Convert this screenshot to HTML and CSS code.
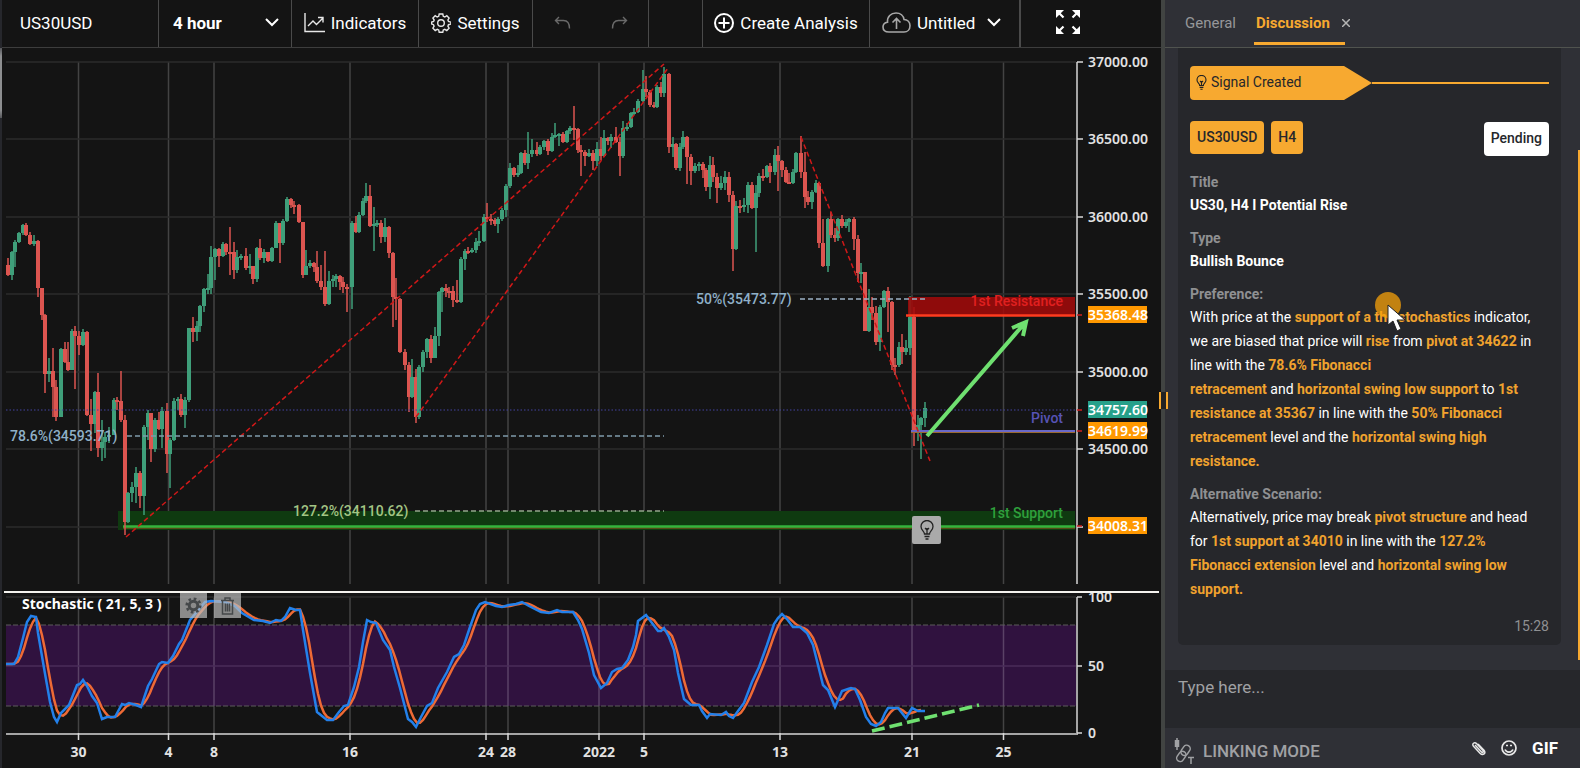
FILE: index.html
```html
<!DOCTYPE html>
<html lang="en">
<head>
    <meta charset="UTF-8">
    <meta name="viewport" content="width=device-width, initial-scale=1.0">
    <title>US30USD - Chart</title>
    <link rel="stylesheet" href="styles.css">
</head>
<body>
    <div class="app">
        <div class="edge"></div>

        <main class="workspace">
            <header class="toolbar">
                <button type="button" class="tool tool-symbol">US30USD</button>
                <div class="tool tool-interval">
                    <select class="tool-select" aria-label="Interval">
                        <option>4 hour</option>
                    </select>
                    <svg class="chevron" width="14" height="9" viewBox="0 0 14 9"><path d="M1 1l6 6 6-6" /></svg>
                </div>
                <button type="button" class="tool tool-indicators">
                    <svg class="icon" width="21" height="20" viewBox="0 0 21 20"><path d="M1 0v18.500h20M4 13l5-5 3.500 3.500L19 5M14 4.500h5v5" /></svg>
                    Indicators
                </button>
                <button type="button" class="tool tool-settings">
                    <svg class="icon" width="20" height="20" viewBox="0 0 20 20"><path d="M8.200 1h3.600l.5 2.300 1.500.7 2-1.300 2.300 2.300-1.200 2 .6 1.500 2.400.6v2l-2.400.6-.6 1.500 1.200 2-2.300 2.300-2-1.200-1.500.6-.5 2.400H8.200l-.5-2.400-1.500-.6-2 1.200-2.300-2.300 1.200-2-.6-1.500L.6 11V9.100l2-.6.6-1.500-1.300-2 2.300-2.300 2 1.300 1.500-.7z" /><circle cx="10" cy="10" r="3.300" /></svg>
                    Settings
                </button>
                <div class="tool tool-history">
                    <button type="button" class="history-btn" aria-label="Undo">
                        <svg class="icon" width="18" height="14" viewBox="0 0 18 14"><path d="M5 1L1.500 4.500 5 8M1.500 4.500h8c4 0 6 3 6 8" /></svg>
                    </button>
                    <button type="button" class="history-btn" aria-label="Redo">
                        <svg class="icon" width="18" height="14" viewBox="0 0 18 14"><path d="M13 1l3.500 3.500L13 8M16.500 4.500h-8c-4 0-6 3-6 8" /></svg>
                    </button>
                </div>
                <div class="tool tool-gap"></div>
                <button type="button" class="tool tool-create">
                    <svg class="icon icon-bold" width="20" height="20" viewBox="0 0 20 20"><circle cx="10" cy="10" r="9" /><path d="M10 4.500v11M4.500 10h11" /></svg>
                    Create Analysis
                </button>
                <div class="tool tool-file">
                    <svg class="icon icon-dim" width="29" height="22" viewBox="0 0 29 22"><path d="M7 20c-4 0-6-2.300-6-5 0-2.500 2-4.500 4.500-4.800C5 4.500 9 1 14 1c4.500 0 7.500 2.800 8 6.500 3.500.2 6 2.800 6 6.200 0 3.800-2.500 6.300-6 6.300zM14.500 17V7M10.500 10.500l4-4 4 4" /></svg>
                    <select class="tool-select" aria-label="Analysis">
                        <option>Untitled</option>
                    </select>
                    <svg class="chevron" width="14" height="9" viewBox="0 0 14 9"><path d="M1 1l6 6 6-6" /></svg>
                </div>
                <button type="button" class="tool tool-full" aria-label="Full screen">
                    <svg width="24" height="24" viewBox="0 0 24 24"><path d="M0 0h8L0 8zM24 0h-8l8 8zM0 24h8l-8-8zM24 24h-8l8-8z" fill="#fff" /><path d="M2 2l5.500 5.500M22 2l-5.500 5.500M2 22l5.500-5.500M22 22l-5.500-5.500" stroke="#fff" stroke-width="2.200" /></svg>
                </button>
            </header>

            <section class="chart">
                <svg class="chart-svg" id="chart" viewBox="2 48 1159 720" preserveAspectRatio="xMinYMin meet"></svg>
                <div class="study">
                    <span class="study-name">Stochastic ( 21, 5, 3 )</span>
                    <button type="button" class="study-btn" aria-label="Study settings">
                        <svg width="17" height="17" viewBox="0 0 20 20" fill="none" stroke="#45484a"><circle cx="10" cy="10" r="5" stroke-width="3.500" /><circle cx="10" cy="10" r="8" stroke-width="3" stroke-dasharray="3.100 3.180" /></svg>
                    </button>
                    <button type="button" class="study-btn" aria-label="Remove study">
                        <svg width="15" height="18" viewBox="0 0 15 18" fill="none" stroke="#45484a" stroke-width="1.500"><path d="M1 3.500h13M5 3V1h5v2M2.500 4v13h10V4M5.500 6.500v8M7.500 6.500v8M9.500 6.500v8" /></svg>
                    </button>
                </div>
                <button type="button" class="idea-pin" aria-label="Signal">
                    <svg width="14" height="20" viewBox="0 0 14 20" fill="none" stroke="#222" stroke-width="1.300"><path d="M4.500 14c0-3-3.500-3.500-3.500-7.500a6 6 0 0 1 12 0c0 4-3.500 4.500-3.500 7.500zM4.500 16.500h5M5.500 19h3M7 14V8M5 8l2 2 2-2" /></svg>
                </button>
            </section>
        </main>

        <div class="splitter"><span class="grip"></span></div>

        <aside class="panel">
            <nav class="tabs">
                <button type="button" class="tab">General</button>
                <button type="button" class="tab tab-active">Discussion</button>
                <button type="button" class="tab-close" aria-label="Close tab">
                    <svg width="8" height="8" viewBox="0 0 8 8" stroke="#b5b5b5" stroke-width="1.500"><path d="M0 0l8 8M8 0L0 8" /></svg>
                </button>
            </nav>

            <div class="messages">
                <article class="card">
                    <div class="ribbon">
                        <div class="ribbon-label">
                            <svg width="11" height="15" viewBox="0 0 14 20" fill="none" stroke="#222" stroke-width="1.500"><path d="M4.500 14c0-3-3.500-3.500-3.500-7.500a6 6 0 0 1 12 0c0 4-3.500 4.500-3.500 7.500zM4.500 16.500h5M5.500 19h3M7 14V8M5 8l2 2 2-2" /></svg>
                            Signal Created
                        </div>
                        <div class="ribbon-line"></div>
                    </div>
                    <div class="badges">
                        <span class="badge">US30USD</span>
                        <span class="badge">H4</span>
                        <span class="badge badge-status">Pending</span>
                    </div>
                    <h4 class="field-name">Title</h4>
                    <p class="field-value">US30, H4 I Potential Rise</p>
                    <h4 class="field-name">Type</h4>
                    <p class="field-value">Bullish Bounce</p>
                    <h4 class="field-name">Preference:</h4>
                    <p class="field-text">With price at the <b>support of a the stochastics</b> indicator, we are biased that price will <b>rise</b> from <b>pivot at 34622</b> in line with the <b>78.6% Fibonacci<br>retracement</b> and <b>horizontal swing low support</b> to <b>1st resistance at 35367</b> in line with the <b>50% Fibonacci retracement</b> level and the <b>horizontal swing high resistance.</b></p>
                    <h4 class="field-name">Alternative Scenario:</h4>
                    <p class="field-text">Alternatively, price may break <b>pivot structure</b> and head for <b>1st support at 34010</b> in line with the <b>127.2% Fibonacci extension</b> level and <b>horizontal swing low support.</b></p>
                    <time class="card-time">15:28</time>
                </article>
                <div class="scroll-thumb"></div>
            </div>

            <textarea class="composer" placeholder="Type here..." aria-label="Message"></textarea>

            <footer class="actions">
                <button type="button" class="link-mode">
                    <svg width="20" height="26" viewBox="0 0 20 26" fill="none" stroke="#a0a1a4" stroke-width="1.500"><path d="M3 0v12" /><path d="M3 2v7" stroke-width="4.500" /><g transform="rotate(35 9 16)"><rect x="5.500" y="6" width="7" height="11" rx="3.500" /><rect x="5.500" y="13.500" width="7" height="11" rx="3.500" /></g><path d="M14 19.500h6M17 19.500v6.500" /></svg>
                    LINKING MODE
                </button>
                <button type="button" class="action-btn" aria-label="Attach">
                    <svg width="16" height="16" viewBox="0 0 16 16" fill="none" stroke="#e8e8e8" stroke-width="1.500"><path d="M5 5l6.500 7c1 1 2.500-.3 1.500-1.400L6.500 3.500C4.500 1.500 1.500 4 3.500 6.200l6.500 7c3 3 6.500 0 4-3L8 4" /></svg>
                </button>
                <button type="button" class="action-btn" aria-label="Emoji">
                    <svg width="16" height="16" viewBox="0 0 16 16" fill="none" stroke="#e8e8e8" stroke-width="1.700"><circle cx="8" cy="8" r="7" /><path d="M4 9.500c1.500 3.500 6.500 3.500 8 0M5 5.500h2M9 5.500h2" /></svg>
                </button>
                <button type="button" class="action-btn gif-btn">GIF</button>
            </footer>
        </aside>
    </div>

    <svg class="pointer" width="32" height="40" viewBox="0 0 32 40"><circle cx="13" cy="13" r="13" fill="#f7a10a" fill-opacity="0.75" /><path d="M13 13v20l5-4 4 10 4-2-4-9h8z" fill="#fff" stroke="#222" /></svg>

    <script src="chart.js"></script>
</body>
</html>
```

FILE: styles.css
```css
* { box-sizing: border-box; }

body { margin: 0; background: #141414; color: #fff; font-family: Roboto, sans-serif; font-size: 14px; }

button, select, textarea { font: inherit; color: inherit; background: none; border: 0; padding: 0; margin: 0; }
button { cursor: pointer; }

.app { display: flex; height: 100vh; overflow: hidden; }
.edge { width: 2px; background: linear-gradient(#26272c 48px, #55565a 48px, #8d8e90 56px, #8d8e90 110px, #55565a 118px, #26272c 118px); }
.workspace { flex: 1; min-width: 0; display: flex; flex-direction: column; }

/* Toolbar */
.toolbar { display: flex; height: 48px; border-bottom: 1px solid #3d3d3d; font-size: 17px; }
.tool { display: flex; align-items: center; justify-content: center; gap: 6px; padding-bottom: 2px; border-right: 1px solid #4a4a4a; white-space: nowrap; }
.tool-symbol { width: 157px; justify-content: flex-start; padding-left: 18px; }
.tool-interval { width: 133px; padding: 0 12px 2px 14px; font-weight: 700; }
.tool-indicators { width: 127px; }
.tool-settings { width: 114px; }
.tool-history { width: 116px; gap: 38px; }
.tool-gap { width: 54px; }
.tool-create { width: 167px; }
.tool-file { width: 151px; padding: 0 18px 2px 12px; border-right: 2px solid #4a4a4a; }
.tool-full { flex: 1; border-right: 0; padding: 0 46px 3px 0; }
.tool-select { flex: 1; min-width: 0; appearance: none; outline: none; }

.icon { fill: none; stroke: #e8e8e8; stroke-width: 1.4; flex: none; }
.icon-bold { stroke: #fff; stroke-width: 2; }
.icon-dim { stroke: #a8a8a8; stroke-width: 1.6; }
.history-btn { display: flex; }
.history-btn .icon { stroke: #6a6a6a; }
.chevron { fill: none; stroke: #fff; stroke-width: 2; flex: none; pointer-events: none; }

/* Chart */
.chart { flex: 1; min-height: 0; position: relative; }
.chart-svg { display: block; width: 100%; height: 100%; font-family: "Noto Sans", sans-serif; font-size: 14px; font-weight: 600; }
.axis-text { fill: #e2e2e2; }
.axis-day { font-weight: 700; }
.price-tag { fill: #fff; }
.note, .fib { font-family: Roboto, sans-serif; font-size: 14px; font-weight: 500; }

.study { position: absolute; left: 20px; top: 545px; display: flex; align-items: flex-start; gap: 7px; }
.study-name { width: 151px; font: 700 14px/22px "Noto Sans", sans-serif; }
.study-btn { width: 27px; height: 25px; display: flex; align-items: center; justify-content: center; background: rgba(190, 190, 190, 0.7); }
.idea-pin { position: absolute; left: 910px; top: 468px; width: 29px; height: 28px; display: flex; align-items: center; justify-content: center; background: #aaa; border-radius: 2px; }

.splitter { width: 4px; background: #414442; position: relative; }
.grip { position: absolute; left: -2px; top: 392px; width: 9px; height: 17px; border: solid #f7a930; border-width: 0 2px; background: #222; z-index: 1; }

/* Discussion panel */
.panel { width: 415px; display: flex; flex-direction: column; background: #2f3036; }
.tabs { display: flex; height: 48px; padding: 0 20px; border-bottom: 1px solid #50534f; font-size: 15px; }
.tab { height: 45px; color: #96979a; }
.tab-active { width: 91px; margin-left: 18px; padding: 3px 0 0 2px; text-align: left; color: #f7a930; font-weight: 700; border-bottom: 3px solid #f7a930; }
.tab-close { height: 45px; display: flex; align-items: center; margin-left: -3px; }

.messages { flex: 1; position: relative; padding: 0 19px 25px 13px; min-height: 0; }
.card { height: 100%; display: flex; flex-direction: column; padding: 18px 12px 11px; background: #26272b; border-radius: 0 0 5px 5px; }
.ribbon { display: flex; align-items: center; }
.ribbon-label { display: flex; align-items: center; gap: 4px; width: 182px; height: 34px; padding: 0 6px 2px; background: #f7a930; color: #26272b; border-radius: 4px; clip-path: polygon(0 0, 154px 0, 100% 50%, 154px 100%, 0 100%); }
.ribbon-line { flex: 1; height: 2px; background: #f7a930; }
.badges { display: flex; gap: 7px; margin: 21px 0 15px; }
.badge { height: 33px; padding: 0 7px; line-height: 32px; background: #f7a930; color: #26272b; border-radius: 4px; font-weight: 500; }
.badge-status { margin: 1px 0 0 auto; height: 34px; line-height: 33px; background: #fff; }

.field-name { margin: 0; line-height: 22px; font-size: 14px; font-weight: 700; color: #8f9092; }
.field-value { margin: 0 0 10px; line-height: 24px; font-weight: 700; }
.field-text { margin: 0 0 10px; padding-right: 12px; line-height: 24px; }
.field-text b { color: #f0a22e; }
.card-time { margin-top: auto; align-self: flex-end; color: #8f9092; }
.scroll-thumb { position: absolute; right: 0; top: 102px; bottom: 10px; width: 2px; background: #f7a930; }

.composer { height: 58px; padding: 7px 13px; background: #26272b; resize: none; outline: none; font-size: 17px; line-height: 20px; }
.composer::placeholder { color: #a0a1a4; opacity: 1; }
.actions { height: 40px; display: flex; align-items: center; gap: 15px; padding: 0 22px 0 9px; }
.link-mode { display: flex; align-items: center; gap: 9px; margin-right: auto; padding-top: 6px; font-size: 17px; font-weight: 500; color: #a0a1a4; }
.action-btn { display: flex; }
.gif-btn { font-size: 17px; font-weight: 700; }

.pointer { position: absolute; left: 1375px; top: 292px; pointer-events: none; overflow: visible; }
```

FILE: chart.js
```js
const svg = document.getElementById('chart');
const UP = '#3f9f7a';
const DOWN = '#dc5550';

function add(tag, attrs, text) {
    const el = document.createElementNS('http://www.w3.org/2000/svg', tag);
    for (const key in attrs) el.setAttribute(key, attrs[key]);
    if (text !== undefined) el.textContent = text;
    svg.appendChild(el);
    return el;
}

function line(x1, y1, x2, y2, stroke, width, dash) {
    return add('line', { x1, y1, x2, y2, stroke, 'stroke-width': width || 1, 'stroke-dasharray': dash || 'none' });
}

// Grid
const days = [[78.5, '30'], [168.5, '4'], [214, '8'], [350, '16'], [486, '24'], [508, '28'], [599, '2022'], [644, '5'], [780, '13'], [912, '21'], [1003.5, '25']];
const prices = [[62, '37000.00'], [139, '36500.00'], [217, '36000.00'], [294, '35500.00'], [372, '35000.00'], [449, '34500.00'], [527, '']];

add('rect', { x: 6, y: 625, width: 1071, height: 81, fill: '#30123f' });
days.forEach(d => {
    line(d[0], 62, d[0], 584, '#fff', 1.5).setAttribute('opacity', 0.2);
    line(d[0], 597, d[0], 733, '#fff', 1.5).setAttribute('opacity', 0.2);
});
prices.forEach(p => line(6, p[0], 1076, p[0], '#2b2b2b', 1.5));
line(6, 597, 1076, 597, '#2b2b2b', 1.5);
line(6, 666, 1076, 666, '#4a2d5a', 1.5);
line(6, 625, 1076, 625, '#5c5a5c', 1, '5 2');
line(6, 706, 1076, 706, '#5c5a5c', 1, '5 2');

// Support zone
add('rect', { x: 118, y: 511, width: 957, height: 19, fill: '#0f3a10' });
line(123, 528, 1075, 528, '#9b5a1c', 1);
line(123, 526.5, 1075, 526.5, '#35b53c', 2.5);

// x, high, low, close
const candles = [
    [8,258,276,275],[12,251,280,252],[15,240,267,242],[19,232,243,233],[23,224,235,225],[26,223,236,235],[30,232,245,244],[34,235,246,241],
    [38,240,297,288],[42,288,320,315],[45,314,393,374],[49,358,382,371],[53,348,417,387],[56,380,421,417],[61,348,417,349],[65,342,363,362],
    [68,342,371,370],[72,329,370,331],[75,326,389,336],[79,331,355,345],[83,329,346,332],[87,331,416,415],[91,399,451,424],[95,391,433,392],
    [98,373,457,448],[102,420,461,442],[105,432,458,437],[109,427,443,435],[114,398,435,400],[117,397,410,401],[121,371,422,420],[125,415,535,522],
    [128,492,523,493],[132,482,502,487],[136,467,503,473],[140,471,508,496],[144,425,515,427],[148,410,440,413],[151,413,462,449],[155,418,452,420],
    [159,412,430,429],[162,407,448,411],[167,403,473,454],[170,438,488,440],[174,398,441,401],[178,397,410,399],[181,394,417,415],[185,397,428,400],
    [189,328,402,328],[193,317,342,332],[197,321,341,326],[200,305,332,306],[204,288,312,289],[208,274,294,288],[211,246,294,257],[215,248,280,249],
    [219,248,267,256],[223,242,257,244],[226,243,255,252],[230,227,275,252],[234,242,279,270],[237,250,273,257],[241,254,260,256],[246,248,270,268],
    [250,254,274,266],[253,266,284,279],[257,247,282,248],[260,239,260,258],[264,249,263,252],[268,252,262,261],[272,247,262,248],[276,221,248,223],
    [280,223,263,243],[283,219,245,221],[287,197,222,199],[291,198,208,205],[294,201,214,205],[299,204,223,222],[303,222,278,275],[306,250,275,266],
    [310,260,268,263],[314,262,272,267],[317,251,283,281],[321,265,290,287],[325,251,306,304],[329,271,305,281],[333,275,287,279],[336,274,287,276],
    [340,275,290,282],[343,277,293,287],[347,284,312,287],[352,221,309,223],[356,216,233,232],[359,212,233,215],[363,198,216,201],[366,183,203,196],
    [370,185,227,226],[374,207,251,224],[377,220,227,223],[381,220,243,237],[385,218,242,227],[389,226,258,253],[393,252,327,297],[396,278,320,299],
    [400,298,353,352],[405,349,370,365],[409,362,412,397],[412,359,398,377],[416,369,423,417],[419,365,419,367],[423,350,372,352],[427,338,358,339],
    [431,335,363,358],[435,327,358,336],[439,291,346,292],[442,287,312,288],[446,284,297,291],[449,287,298,291],[453,286,307,300],[457,280,303,302],
    [461,257,303,259],[465,249,270,251],[468,247,254,252],[472,248,253,250],[476,238,253,242],[479,231,246,241],[484,214,242,217],[487,203,222,219],
    [491,214,225,220],[495,218,226,224],[498,217,233,219],[502,208,221,210],[506,184,217,186],[510,163,188,168],[514,167,177,175],[518,165,177,173],
    [521,152,174,153],[525,150,165,163],[528,132,169,154],[532,139,157,150],[537,142,156,154],[540,145,155,147],[544,140,150,141],[548,139,155,151],
    [552,133,152,137],[555,123,138,135],[559,133,146,134],[563,132,143,142],[567,130,143,131],[570,126,134,128],[574,106,140,129],[578,128,153,150],
    [581,145,176,152],[585,150,166,156],[589,149,157,153],[593,150,170,161],[597,142,166,149],[601,137,160,156],[604,130,157,138],[608,137,145,141],
    [611,134,148,137],[616,127,143,142],[620,137,176,156],[623,121,158,128],[627,123,131,127],[631,112,128,113],[634,108,115,112],[638,99,113,101],
    [643,70,102,89],[646,76,97,92],[650,90,107,105],[654,102,108,107],[657,85,108,87],[661,82,97,93],[664,67,97,74],[669,73,153,147],
    [673,137,157,144],[676,143,170,168],[680,143,171,147],[683,131,149,137],[687,136,184,157],[691,154,185,171],[695,163,173,166],[699,162,171,164],
    [703,162,178,170],[706,168,191,187],[710,156,199,165],[713,157,182,177],[717,173,203,188],[721,176,190,183],[725,171,190,177],[729,172,202,195],
    [733,191,271,249],[736,201,250,206],[740,200,213,207],[744,198,212,205],[748,182,213,185],[752,182,209,208],[756,185,252,193],[759,173,197,176],
    [763,169,181,177],[767,165,178,166],[770,163,183,172],[775,149,175,155],[778,146,191,161],[782,160,177,170],[786,167,183,182],[789,173,184,183],
    [793,169,184,172],[796,152,173,153],[801,136,178,172],[805,152,208,197],[808,191,205,202],[812,190,209,192],[816,180,193,183],[819,182,248,243],
    [823,219,267,266],[828,218,272,219],[831,212,238,235],[835,228,242,238],[838,218,241,219],[842,215,228,226],[846,219,228,222],[849,218,232,219],
    [854,217,250,239],[858,235,282,273],[861,263,283,272],[865,272,331,331],[869,289,332,307],[872,297,320,313],[876,306,345,342],[880,305,351,307],
    [884,290,308,291],[888,287,332,302],[892,301,370,365],[895,358,375,365],[899,342,367,347],[902,334,364,352],[906,340,355,348],[910,296,355,317],
    [914,307,446,433],[918,415,441,425],[921,417,459,418],[925,402,427,408]
];

let open = 265;
candles.forEach(([x, high, low, close]) => {
    const color = close < open ? UP : DOWN;
    line(x, high, x, low, color, 1.5);
    add('rect', { x: x - 2, y: Math.min(open, close), width: 4, height: Math.max(2, Math.abs(close - open)), fill: color });
    open = close;
});

// Resistance and pivot
add('rect', { x: 908, y: 297, width: 167, height: 18, fill: '#a00a0a', 'fill-opacity': 0.88 });
line(906, 315.5, 1075, 315.5, '#ff3b1f', 2.5);
line(6, 410, 1076, 410, '#4343a0', 1, '1.5 2');
line(911, 432, 1075, 432, '#9b6a30', 2);
line(911, 431, 1075, 431, '#6a68c8', 2);

// Trend lines
[[126, 537, 664, 64], [416, 417, 668, 68], [801, 137, 930, 461]].forEach(t => line(t[0], t[1], t[2], t[3], '#d01818', 1.5, '5 3'));

// Fibonacci levels
line(127, 436, 664, 436, '#7f9bab', 1.5, '5 3');
line(415, 511, 664, 511, '#93a58b', 1.5, '5 3');
line(800, 299, 927, 299, '#9bb0c4', 1.5, '5 3');
add('text', { x: 10, y: 441, class: 'fib', fill: '#8fb0c8' }, '78.6%(34593.71)');
add('text', { x: 293, y: 516, class: 'fib', fill: '#a3c585' }, '127.2%(34110.62)');
add('text', { x: 696, y: 304, class: 'fib', fill: '#8fb0c8' }, '50%(35473.77)');

add('text', { x: 1063, y: 306, class: 'note', fill: '#e02020', 'text-anchor': 'end' }, '1st Resistance');
add('text', { x: 1063, y: 423, class: 'note', fill: '#5753b5', 'text-anchor': 'end' }, 'Pivot');
add('text', { x: 1063, y: 518, class: 'note', fill: '#2fa03c', 'text-anchor': 'end' }, '1st Support');

add('path', { d: 'M927 436L1024 324M1012 328l14-6-3 14', fill: 'none', stroke: '#6fe070', 'stroke-width': 4 });

// Stochastic %K
const k = [
    [6,664],[14,664],[18,657],[23,638],[27,622],[31,616],[36,617],[38,633],[44,668],[50,702],[54,717],[57,722],[61,713],[69,705],[77,685],[80,684],
    [83,680],[87,686],[92,696],[97,703],[102,719],[107,717],[115,717],[122,704],[125,705],[129,703],[136,705],[141,707],[148,686],[152,679],[159,664],
    [162,662],[168,663],[173,656],[179,644],[182,640],[190,620],[196,613],[205,602],[211,601],[225,602],[235,606],[242,613],[254,620],[263,621],
    [270,623],[276,620],[281,621],[285,617],[290,608],[296,610],[300,610],[303,630],[310,673],[317,712],[327,720],[333,720],[339,712],[344,706],
    [348,705],[354,687],[359,667],[363,642],[367,620],[371,622],[376,623],[383,640],[390,650],[394,667],[400,688],[408,719],[412,722],[416,727],
    [421,717],[427,706],[432,703],[438,688],[447,672],[454,657],[459,654],[464,645],[470,627],[476,610],[480,604],[485,602],[496,606],[502,607],
    [509,605],[516,604],[522,602],[529,606],[541,612],[549,613],[557,610],[562,612],[573,612],[578,620],[582,629],[589,653],[594,675],[601,688],
    [607,683],[612,672],[617,669],[622,668],[628,660],[633,647],[636,635],[638,621],[646,615],[652,623],[658,631],[661,631],[664,628],[669,637],
    [674,650],[678,673],[684,699],[691,705],[699,705],[702,711],[707,718],[710,714],[721,715],[726,712],[729,716],[733,718],[738,711],[744,703],
    [752,682],[759,667],[767,645],[774,624],[778,618],[782,614],[787,619],[793,627],[800,627],[807,633],[813,645],[816,657],[823,685],[828,690],
    [835,707],[842,691],[848,689],[851,688],[855,689],[860,700],[866,717],[871,724],[876,726],[881,722],[885,713],[888,708],[898,708],[906,718],
    [912,708],[918,711],[925,711]
];

function valueAt(x) {
    if (x <= k[0][0]) return k[0][1];
    for (let i = 1; i < k.length; i++) {
        if (x <= k[i][0]) {
            const [x0, y0] = k[i - 1];
            const [x1, y1] = k[i];
            return y0 + (y1 - y0) * (x - x0) / (x1 - x0);
        }
    }
    return k[k.length - 1][1];
}

// %D is the 3 bar average of %K
const d = [];
for (let x = 6; x <= 922; x += 3) {
    d.push([x, ((valueAt(x) + valueAt(x - 4) + valueAt(x - 8)) / 3).toFixed(1)]);
}
add('polyline', { points: d.join(' '), fill: 'none', stroke: '#ee6a35', 'stroke-width': 2.5 });
add('polyline', { points: k.join(' '), fill: 'none', stroke: '#2380ea', 'stroke-width': 2.5 });

add('path', { d: 'M872 731L979 705', fill: 'none', stroke: '#6fe070', 'stroke-width': 3.5, 'stroke-dasharray': '13 5' });

// Axes
line(1077, 62, 1077, 584, '#a5a5a5', 2);
line(1077, 597, 1077, 734, '#a5a5a5', 2);
line(6, 734, 1078, 734, '#a5a5a5', 2);

prices.forEach(p => {
    line(1077, p[0], 1083, p[0], '#d8d8d8', 1.5);
    add('text', { x: 1088, y: p[0] + 5, class: 'axis-text' }, p[1]);
});
[[597, '100'], [666, '50'], [733, '0']].forEach(p => {
    line(1077, p[0], 1082, p[0], '#d8d8d8', 1.5);
    add('text', { x: 1088, y: p[0] + 5, class: 'axis-text' }, p[1]);
});
days.forEach(p => {
    line(p[0], 733, p[0], 740, '#d8d8d8', 1.5);
    add('text', { x: p[0], y: 757, class: 'axis-text axis-day', 'text-anchor': 'middle' }, p[1]);
});
line(4, 592, 1159, 592, '#f4f2ee', 2);

[[315, '35368.48', '#ff9800'], [410, '34757.60', '#26a08a'], [431, '34619.99', '#ff9800'], [526, '34008.31', '#ff9800']].forEach(t => {
    line(1077, t[0], 1082, t[0], '#d02020', 1.5);
    add('rect', { x: 1088, y: t[0] - 9, width: 59, height: 17, fill: t[2] });
    add('text', { x: 1088, y: t[0] + 5, class: 'price-tag' }, t[1]);
});
```
